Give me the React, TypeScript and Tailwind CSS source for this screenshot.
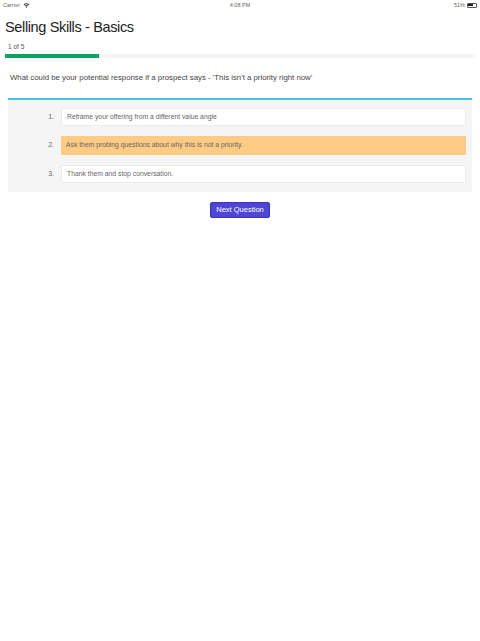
export default function App() {
  return (
    <div className="h-[641px] w-[480px] overflow-hidden bg-white font-['Liberation_Sans',sans-serif]">
      <div className="flex h-[10px] items-center justify-between px-[3px] text-[5.5px] text-[#666]">
        <div className="flex w-[60px] items-center gap-[3px]">
          <span>Carrier</span>
          <svg width="7" height="5" viewBox="0 0 16 12" fill="#333">
            <path d="M8 12 L5.6 9 A4 4 0 0 1 10.4 9 Z" />
            <path d="M3.6 6.6 A7 7 0 0 1 12.4 6.6 L11.2 8 A5 5 0 0 0 4.8 8 Z" />
            <path d="M1 3.6 A11 11 0 0 1 15 3.6 L13.6 5.2 A9 9 0 0 0 2.4 5.2 Z" />
          </svg>
        </div>
        <span>4:08 PM</span>
        <div className="flex w-[60px] items-center justify-end gap-[2px]">
          <span>51%</span>
          <div className="flex h-[5px] w-[10px] items-stretch rounded-[1px] border-[0.5px] border-[#555] p-[0.5px]">
            <div className="w-[5px] bg-[#222]" />
          </div>
        </div>
      </div>
      <h1 className="mt-[7px] h-[20px] pl-[5px] text-[14.5px] leading-[20px] tracking-[-0.36px] text-[#222]">Selling Skills - Basics</h1>
      <div className="mt-[5px] pl-[8px] text-[6.5px] leading-[9px] text-[#555]">1 of 5</div>
      <div className="mx-[5px] mt-[3px] h-[4px] bg-[#f6f6f6]">
        <div className="h-full w-[94px] bg-[#0ba360]" />
      </div>
      <p className="mt-[15px] pl-[10px] text-[7.8px] leading-[10px] text-[#444]">
        What could be your potential response if a prospect says - 'This isn't a priority right now'
      </p>
      <div className="mx-[8px] mt-[15px] bg-[#f5f5f5] pb-[9px]">
        <div className="mb-[8px] h-[2px] bg-[#45c6df]" />
        <div className="flex flex-col gap-[10px] pr-[6px]">
          <Row n="1." text="Reframe your offering from a different value angle" />
          <Row n="2." text="Ask them probing questions about why this is not a priority." selected />
          <Row n="3." text="Thank them and stop conversation." />
        </div>
      </div>
      <div className="mt-[10px] flex justify-center">
        <button className="h-[16px] w-[60px] rounded-[2px] border border-[#3a36b8] bg-[#4f46d8] text-[7.5px] text-white">
          Next Question
        </button>
      </div>
    </div>
  );
}

function Row({ n, text, selected }: { n: string; text: string; selected?: boolean }) {
  return (
    <div className="flex items-center">
      <div className="w-[46px] text-right text-[7px] text-[#666]">{n}</div>
      <div className="w-[7px]" />
      <div
        className={
          selected
            ? "flex h-[19px] flex-1 items-center rounded-[1px] bg-[#fecb84] pl-[5px] text-[6.8px] text-[#666]"
            : "flex h-[18px] flex-1 items-center rounded-[1px] border border-[#ececec] bg-white pl-[5px] text-[6.8px] text-[#666]"
        }
      >
        {text}
      </div>
    </div>
  );
}
